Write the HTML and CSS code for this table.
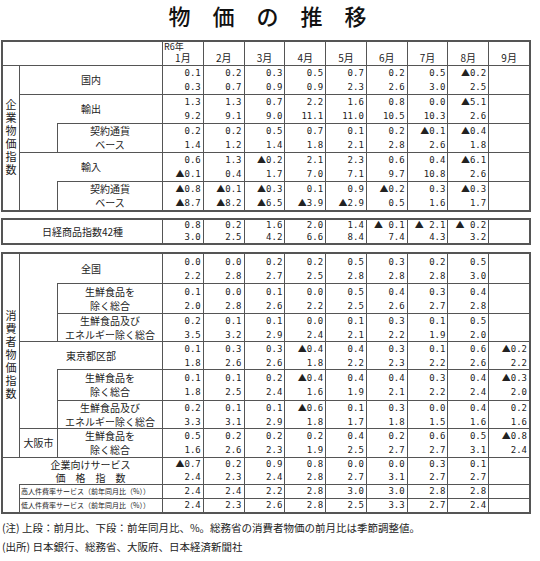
FILE: index.html
```html
<!DOCTYPE html>
<html lang="ja">
<head>
<meta charset="utf-8">
<title>物価の推移</title>
<link rel="stylesheet" href="styles.css">
</head>
<body>
<div class="page">
  <h1 class="title">物　価　の　推　移</h1>

  <div class="grid g1">
    <div class="c s3"></div>
    <div class="c m1"><span class="yr">R6年</span><span class="mo">1月</span></div>
    <div class="c m">2月</div><div class="c m">3月</div><div class="c m">4月</div><div class="c m">5月</div>
    <div class="c m">6月</div><div class="c m">7月</div><div class="c m">8月</div><div class="c m">9月</div>

    <div class="c vert rs5"><span>企業物価指数</span></div>
    <div class="c lb s2">国内</div>
    <div class="c v"><span>0.1<br>0.3</span></div><div class="c v"><span>0.2<br>0.7</span></div><div class="c v"><span>0.3<br>0.9</span></div><div class="c v"><span>0.5<br>0.9</span></div><div class="c v"><span>0.7<br>2.3</span></div><div class="c v"><span>0.2<br>2.6</span></div><div class="c v"><span>0.5<br>3.0</span></div><div class="c v"><span><b>▲</b>0.2<br>2.5</span></div><div class="c v"></div>

    <div class="c lb s2">輸出</div>
    <div class="c v"><span>1.3<br>9.2</span></div><div class="c v"><span>1.3<br>9.1</span></div><div class="c v"><span>0.7<br>9.0</span></div><div class="c v"><span>2.2<br>11.1</span></div><div class="c v"><span>1.6<br>11.0</span></div><div class="c v"><span>0.8<br>10.5</span></div><div class="c v"><span>0.0<br>10.3</span></div><div class="c v"><span><b>▲</b>5.1<br>2.6</span></div><div class="c v"></div>

    <div class="c nt"></div>
    <div class="c lb">契約通貨<br>ベース</div>
    <div class="c v"><span>0.2<br>1.4</span></div><div class="c v"><span>0.2<br>1.2</span></div><div class="c v"><span>0.5<br>1.4</span></div><div class="c v"><span>0.7<br>1.8</span></div><div class="c v"><span>0.1<br>2.1</span></div><div class="c v"><span>0.2<br>2.8</span></div><div class="c v"><span><b>▲</b>0.1<br>2.6</span></div><div class="c v"><span><b>▲</b>0.4<br>1.8</span></div><div class="c v"></div>

    <div class="c lb s2">輸入</div>
    <div class="c v"><span>0.6<br><b>▲</b>0.1</span></div><div class="c v"><span>1.3<br>0.4</span></div><div class="c v"><span><b>▲</b>0.2<br>1.7</span></div><div class="c v"><span>2.1<br>7.0</span></div><div class="c v"><span>2.3<br>7.1</span></div><div class="c v"><span>0.6<br>9.7</span></div><div class="c v"><span>0.4<br>10.8</span></div><div class="c v"><span><b>▲</b>6.1<br>2.6</span></div><div class="c v"></div>

    <div class="c nt"></div>
    <div class="c lb">契約通貨<br>ベース</div>
    <div class="c v"><span><b>▲</b>0.8<br><b>▲</b>8.7</span></div><div class="c v"><span><b>▲</b>0.1<br><b>▲</b>8.2</span></div><div class="c v"><span><b>▲</b>0.3<br><b>▲</b>6.5</span></div><div class="c v"><span>0.1<br><b>▲</b>3.9</span></div><div class="c v"><span>0.9<br><b>▲</b>2.9</span></div><div class="c v"><span><b>▲</b>0.2<br>0.5</span></div><div class="c v"><span>0.3<br>1.6</span></div><div class="c v"><span><b>▲</b>0.3<br>1.7</span></div><div class="c v"></div>
  </div>

  <div class="grid g2">
    <div class="c lb s3">日経商品指数42種</div>
    <div class="c v"><span>0.8<br>3.0</span></div><div class="c v"><span>0.2<br>2.5</span></div><div class="c v"><span>1.6<br>4.2</span></div><div class="c v"><span>2.0<br>6.6</span></div><div class="c v"><span>1.4<br>8.4</span></div><div class="c v"><span><b>▲</b> 0.1<br>7.4</span></div><div class="c v"><span><b>▲</b> 2.1<br>4.3</span></div><div class="c v"><span><b>▲</b> 0.2<br>3.2</span></div><div class="c v"></div>
  </div>

  <div class="grid g3">
    <div class="c vert rs7"><span>消費者物価指数</span></div>
    <div class="c lb s2">全国</div>
    <div class="c v"><span>0.0<br>2.2</span></div><div class="c v"><span>0.0<br>2.8</span></div><div class="c v"><span>0.2<br>2.7</span></div><div class="c v"><span>0.2<br>2.5</span></div><div class="c v"><span>0.5<br>2.8</span></div><div class="c v"><span>0.3<br>2.8</span></div><div class="c v"><span>0.2<br>2.8</span></div><div class="c v"><span>0.5<br>3.0</span></div><div class="c v"></div>

    <div class="c nt rs2"></div>
    <div class="c lb">生鮮食品を<br>除く総合</div>
    <div class="c v"><span>0.1<br>2.0</span></div><div class="c v"><span>0.0<br>2.8</span></div><div class="c v"><span>0.1<br>2.6</span></div><div class="c v"><span>0.0<br>2.2</span></div><div class="c v"><span>0.5<br>2.5</span></div><div class="c v"><span>0.4<br>2.6</span></div><div class="c v"><span>0.3<br>2.7</span></div><div class="c v"><span>0.4<br>2.8</span></div><div class="c v"></div>

    <div class="c lb">生鮮食品及び<br>エネルギー除く総合</div>
    <div class="c v"><span>0.2<br>3.5</span></div><div class="c v"><span>0.1<br>3.2</span></div><div class="c v"><span>0.1<br>2.9</span></div><div class="c v"><span>0.0<br>2.4</span></div><div class="c v"><span>0.1<br>2.1</span></div><div class="c v"><span>0.3<br>2.2</span></div><div class="c v"><span>0.1<br>1.9</span></div><div class="c v"><span>0.5<br>2.0</span></div><div class="c v"></div>

    <div class="c lb s2">東京都区部</div>
    <div class="c v"><span>0.1<br>1.8</span></div><div class="c v"><span>0.3<br>2.6</span></div><div class="c v"><span>0.3<br>2.6</span></div><div class="c v"><span><b>▲</b>0.4<br>1.8</span></div><div class="c v"><span>0.4<br>2.2</span></div><div class="c v"><span>0.3<br>2.3</span></div><div class="c v"><span>0.1<br>2.2</span></div><div class="c v"><span>0.6<br>2.6</span></div><div class="c v"><span><b>▲</b>0.2<br>2.2</span></div>

    <div class="c nt rs2"></div>
    <div class="c lb">生鮮食品を<br>除く総合</div>
    <div class="c v"><span>0.1<br>1.8</span></div><div class="c v"><span>0.1<br>2.5</span></div><div class="c v"><span>0.2<br>2.4</span></div><div class="c v"><span><b>▲</b>0.4<br>1.6</span></div><div class="c v"><span>0.4<br>1.9</span></div><div class="c v"><span>0.4<br>2.1</span></div><div class="c v"><span>0.3<br>2.2</span></div><div class="c v"><span>0.4<br>2.4</span></div><div class="c v"><span><b>▲</b>0.3<br>2.0</span></div>

    <div class="c lb">生鮮食品及び<br>エネルギー除く総合</div>
    <div class="c v"><span>0.2<br>3.3</span></div><div class="c v"><span>0.1<br>3.1</span></div><div class="c v"><span>0.1<br>2.9</span></div><div class="c v"><span><b>▲</b>0.6<br>1.8</span></div><div class="c v"><span>0.1<br>1.7</span></div><div class="c v"><span>0.3<br>1.8</span></div><div class="c v"><span>0.0<br>1.5</span></div><div class="c v"><span>0.4<br>1.6</span></div><div class="c v"><span>0.2<br>1.6</span></div>

    <div class="c lb city">大阪市</div>
    <div class="c lb">生鮮食品を<br>除く総合</div>
    <div class="c v"><span>0.5<br>1.6</span></div><div class="c v"><span>0.2<br>2.6</span></div><div class="c v"><span>0.2<br>2.3</span></div><div class="c v"><span>0.2<br>1.9</span></div><div class="c v"><span>0.4<br>2.5</span></div><div class="c v"><span>0.2<br>2.7</span></div><div class="c v"><span>0.6<br>2.7</span></div><div class="c v"><span>0.5<br>3.1</span></div><div class="c v"><span><b>▲</b>0.8<br>2.4</span></div>

    <div class="c rs3"></div>
    <div class="c lb s2 nl svc">企業向けサービス<br>価　格　指　数</div>
    <div class="c v svc"><span><b>▲</b>0.7<br>2.4</span></div><div class="c v svc"><span>0.2<br>2.3</span></div><div class="c v svc"><span>0.9<br>2.4</span></div><div class="c v svc"><span>0.8<br>2.8</span></div><div class="c v svc"><span>0.0<br>2.7</span></div><div class="c v svc"><span>0.0<br>3.1</span></div><div class="c v svc"><span>0.3<br>2.7</span></div><div class="c v svc"><span>0.1<br>2.7</span></div><div class="c v svc"></div>

    <div class="c s2 tiny">高人件費率サービス（前年同月比（%））</div>
    <div class="c v sm">2.4</div><div class="c v sm">2.4</div><div class="c v sm">2.2</div><div class="c v sm">2.8</div><div class="c v sm">3.0</div><div class="c v sm">3.0</div><div class="c v sm">2.8</div><div class="c v sm">2.8</div><div class="c v sm"></div>

    <div class="c s2 tiny">低人件費率サービス（前年同月比（%））</div>
    <div class="c v sm">2.4</div><div class="c v sm">2.3</div><div class="c v sm">2.6</div><div class="c v sm">2.8</div><div class="c v sm">2.5</div><div class="c v sm">3.3</div><div class="c v sm">2.7</div><div class="c v sm">2.4</div><div class="c v sm"></div>
  </div>

  <div class="notes">
    <p>(注) 上段：前月比、下段：前年同月比、%。総務省の消費者物価の前月比は季節調整値。</p>
    <p>(出所) 日本銀行、総務省、大阪府、日本経済新聞社</p>
  </div>
</div>
</body>
</html>
```

FILE: styles.css
```css
* { box-sizing: border-box; }

body {
  margin: 0;
  background: #fff;
  color: #222;
  font-family: "Noto Sans CJK JP", "Noto Sans", sans-serif;
}

.page {
  width: 532px;
  padding-left: 1px;
}

.title {
  margin: 0;
  height: 40px;
  line-height: 31px;
  font-size: 22px;
  font-weight: 500;
  text-align: center;
  color: #111;
  padding-left: 2px;
}

.grid {
  display: grid;
  width: 530px;
  grid-template-columns: 17px 38px 105px repeat(9, 1fr);
  border-top: 1px solid #555;
  border-left: 1px solid #555;
  border-right: 2px solid #555;
  border-bottom: 2px solid #555;
}

.g1 { grid-template-rows: 24px repeat(5, 29px); }
.g2 { grid-template-rows: 24px; margin-top: 6px; }
.g3 {
  grid-template-rows: 30px 30px 28px 28px 31px 28px 29px 27px 14px 14px;
  margin-top: 7px;
}

.c {
  border-top: 1px solid #555;
  border-left: 1px solid #555;
  display: flex;
  align-items: center;
  overflow: hidden;
  white-space: nowrap;
  font-size: 10px;
  line-height: 14px;
  min-width: 0;
}

.s2 { grid-column: span 2; }
.s3 { grid-column: span 3; }
.rs2 { grid-row: span 2; }
.rs3 { grid-row: span 3; }
.rs5 { grid-row: span 5; }
.rs7 { grid-row: span 7; }

.nt { border-top: none; }
.nl { border-left: none; }

.m {
  justify-content: center;
  align-items: flex-end;
  line-height: 12px;
  padding-bottom: 1px;
}

.m1 {
  flex-direction: column;
  align-items: stretch;
  justify-content: space-between;
  padding-bottom: 1px;
}

.yr {
  text-align: left;
  font-size: 9px;
  line-height: 10px;
  padding-left: 1px;
}

.mo {
  text-align: center;
  line-height: 12px;
}

.v {
  justify-content: flex-end;
  text-align: right;
  padding-right: 2px;
  font-family: "DejaVu Sans Mono", monospace;
  font-size: 9px;
  line-height: 14px;
  color: #222;
}

.g2 .v { line-height: 11.5px; }
.v.svc, .lb.svc { line-height: 13px; }
.v.sm { line-height: 13px; }

.v b {
  font-family: "Noto Sans CJK JP", sans-serif;
  font-weight: normal;
  font-size: 9px;
  line-height: 0;
}

.lb {
  justify-content: center;
  text-align: center;
}

.tiny {
  font-size: 7px;
  line-height: 13px;
  padding-left: 1px;
}

.vert {
  justify-content: center;
}

.vert span {
  writing-mode: vertical-rl;
  font-size: 11px;
  letter-spacing: 2px;
  line-height: 14px;
}

.notes {
  margin-top: 4px;
  padding-left: 1px;
  font-size: 10.5px;
  line-height: 19px;
  color: #222;
}

.notes p { margin: 0; }
```
